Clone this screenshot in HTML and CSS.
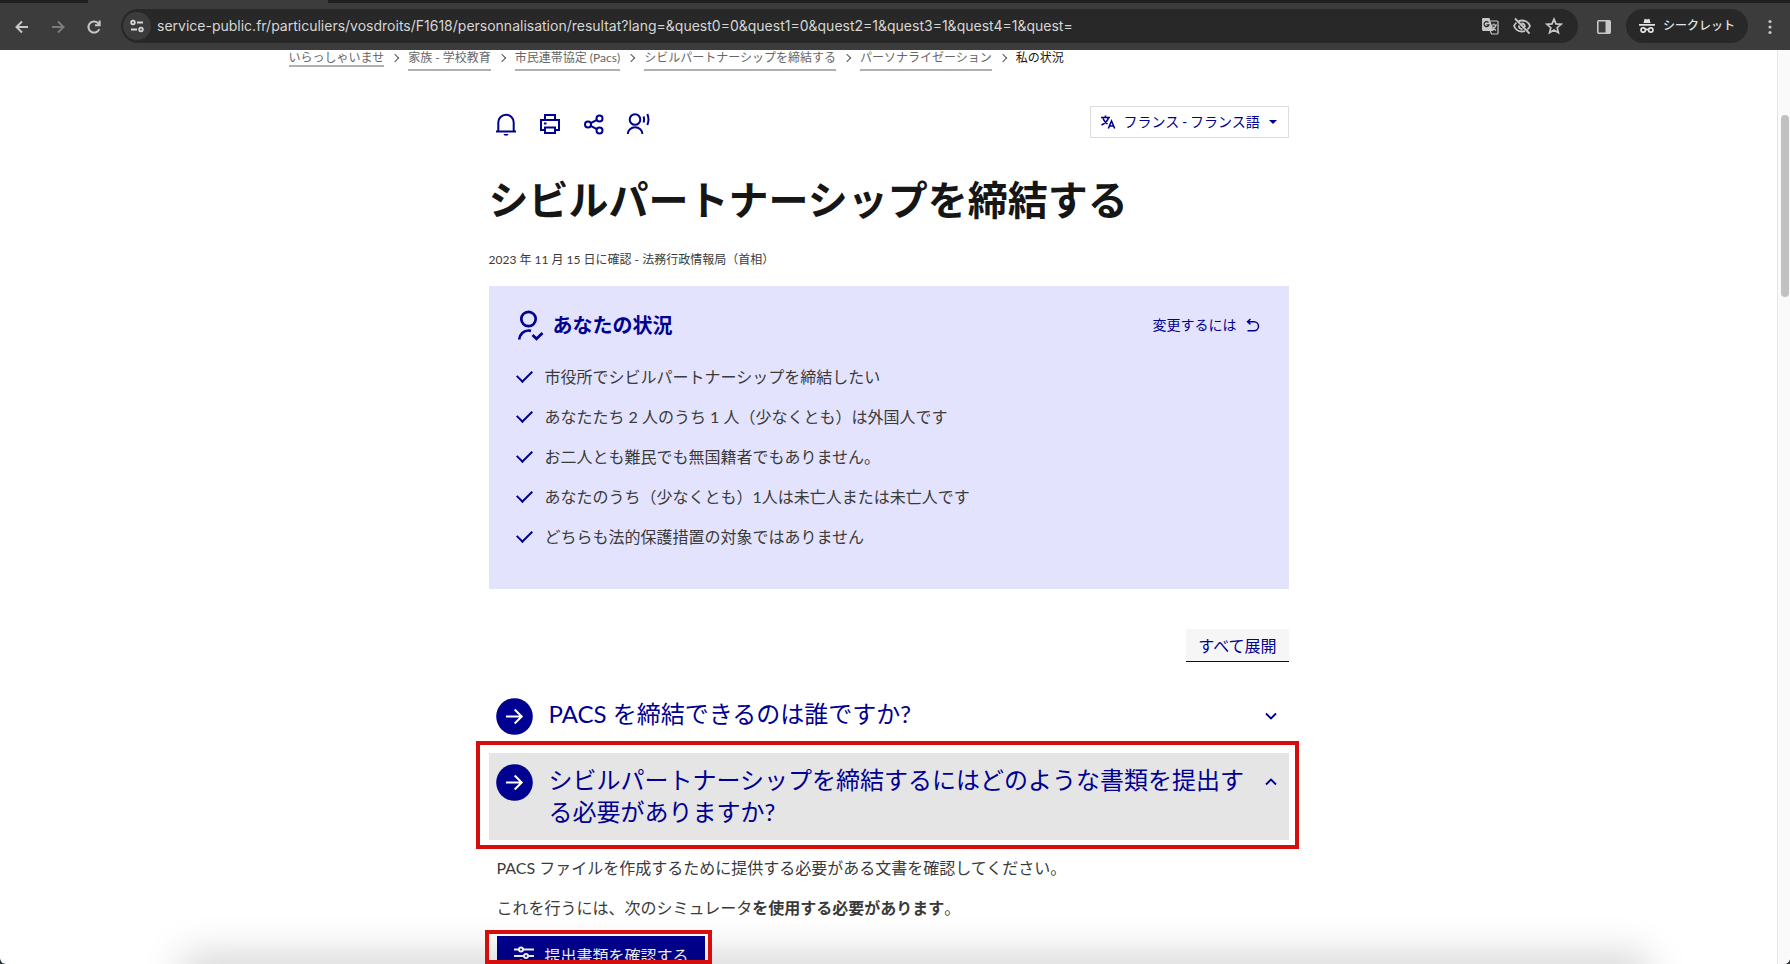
FILE: index.html
```html
<!DOCTYPE html>
<html lang="ja">
<head>
<meta charset="utf-8">
<title>シビルパートナーシップを締結する</title>
<link rel="stylesheet" href="styles.css">
</head>
<body>
<div class="window">
  <div class="tabstrip"><div class="tab-active"></div></div>
  <header class="toolbar">
    <button class="tool" aria-label="戻る"><svg width="18" height="18" viewBox="0 0 18 18" fill="none" stroke="#c7c7c7" stroke-width="2"><path d="M15 9H4M9 3.500L3.500 9 9 14.500"/></svg></button>
    <button class="tool" aria-label="進む"><svg width="18" height="18" viewBox="0 0 18 18" fill="none" stroke="#7b7b7b" stroke-width="2"><path d="M3 9h11M9 3.500l5.500 5.500L9 14.500"/></svg></button>
    <button class="tool" aria-label="再読み込み"><svg width="18" height="18" viewBox="0 0 18 18" fill="none" stroke="#c7c7c7" stroke-width="2"><path d="M14.300 11A5.600 5.600 0 1 1 13 5l1.500 1.500M14.700 2.500v4.700H10"/></svg></button>
    <div class="omnibox">
      <button class="site" aria-label="サイト情報"><svg width="16" height="16" viewBox="0 0 16 16" fill="none" stroke="#d6d6d6" stroke-width="1.800"><circle cx="4" cy="4.500" r="1.800"/><path d="M8 4.500h6M2 11.500h6"/><circle cx="12" cy="11.500" r="1.800"/></svg></button>
      <input class="url" aria-label="アドレス" value="service-public.fr/particuliers/vosdroits/F1618/personnalisation/resultat?lang=&amp;quest0=0&amp;quest1=0&amp;quest2=1&amp;quest3=1&amp;quest4=1&amp;quest=">
      <button class="omni-btn" aria-label="翻訳"><svg width="18" height="18" viewBox="0 0 18 18"><path d="M2 1h6.500l4 13H2.500A1.500 1.500 0 0 1 1 12.500V2a1 1 0 0 1 1-1z" fill="#c7c7c7"/><path d="M7.500 5.500A2.500 2.500 0 1 0 8 7.800H5.500" fill="none" stroke="#282828" stroke-width="1.200"/><path d="M9.500 4H16a1 1 0 0 1 1 1v11a1 1 0 0 1-1 1h-5.500l-1.200-3M10.500 8H16M13 6.500V8M15 8c-.5 2-2 3.800-3.500 4.500M11.500 9.500c.7 1.500 2 3 3.500 4" fill="none" stroke="#c7c7c7" stroke-width="1.200"/></svg></button>
      <button class="omni-btn" aria-label="Cookie をブロック"><svg width="20" height="18" viewBox="0 0 20 18" fill="none" stroke="#c7c7c7" stroke-width="1.800"><path d="M6.500 4.400C7.600 3.800 8.800 3.500 10 3.500c3.500 0 6.500 2 8 5.500-.6 1.400-1.500 2.600-2.600 3.500M13 14c-1 .4-2 .5-3 .5-3.500 0-6.500-2-8-5.500.6-1.400 1.400-2.500 2.500-3.400M3 1.500l14.500 15M12.700 10A3 3 0 0 0 9.500 6.300M7 8.500A3 3 0 0 0 10.500 12"/></svg></button>
      <button class="omni-btn" aria-label="ブックマーク"><svg width="18" height="18" viewBox="0 0 18 18" fill="none" stroke="#c7c7c7" stroke-width="1.700"><path d="M9 2.200l2 4.700 5.100.4-3.900 3.400 1.200 5L9 13l-4.400 2.700 1.200-5L1.900 7.300 7 6.900z"/></svg></button>
    </div>
    <button class="tool panel" aria-label="サイドパネル"><svg width="16" height="16" viewBox="0 0 16 16"><rect x="1.800" y="1.800" width="12.400" height="12.400" rx="1" fill="none" stroke="#c7c7c7" stroke-width="1.600"/><path d="M9.500 1.500H14v13H9.500z" fill="#c7c7c7"/></svg></button>
    <button class="incognito"><svg width="16" height="16" viewBox="0 0 16 16" fill="#e3e3e3"><path d="M4.500 5L5.600.8 8 1.500l2.400-.7L11.500 5zM0 6h16v1.700H0z"/><g fill="none" stroke="#e3e3e3" stroke-width="1.700"><circle cx="4.200" cy="12" r="2.200"/><circle cx="11.800" cy="12" r="2.200"/><path d="M6.400 11.800q1.600-.8 3.200 0"/></g></svg><span>シークレット</span></button>
    <button class="tool more" aria-label="メニュー"><svg width="16" height="16" viewBox="0 0 16 16" fill="#c7c7c7"><circle cx="8" cy="2.500" r="1.600"/><circle cx="8" cy="8" r="1.600"/><circle cx="8" cy="13.500" r="1.600"/></svg></button>
  </header>
  <div class="viewport">
    <div class="page">
      <nav class="crumbs" aria-label="パンくず">
        <a class="home" href="#">いらっしゃいませ</a><i class="sep"></i>
        <a href="#">家族 - 学校教育</a><i class="sep"></i>
        <a href="#">市民連帯協定 (Pacs)</a><i class="sep"></i>
        <a href="#">シビルパートナーシップを締結する</a><i class="sep"></i>
        <a href="#">パーソナライゼーション</a><i class="sep"></i>
        <span>私の状況</span>
      </nav>
      <main class="content">
        <div class="actions">
          <button aria-label="購読"><svg width="24" height="24" viewBox="0 0 24 24" fill="none" stroke="#000091" stroke-width="2"><path d="M4.300 19v-8.500a7.700 7.700 0 0 1 15.400 0V19M2 19.500h20"/><path d="M9.500 22h5a2.500 1.800 0 0 1-5 0z" fill="#000091" stroke="none"/></svg></button>
          <button aria-label="印刷"><svg width="24" height="24" viewBox="0 0 24 24" fill="none" stroke="#000091" stroke-width="2"><path d="M7 8V3h10v5M7 18H3V8h18v10h-4M7 15.500h10V21H7zM6 11.500h2.500"/></svg></button>
          <button aria-label="共有"><svg width="24" height="24" viewBox="0 0 24 24" fill="none" stroke="#000091" stroke-width="2"><circle cx="6" cy="12.500" r="3"/><circle cx="17.500" cy="6.500" r="3"/><circle cx="17.500" cy="18.500" r="3"/><path d="M8.700 11.200l6.200-3.300M8.700 13.800l6.200 3.300"/></svg></button>
          <button aria-label="読み上げ"><svg width="24" height="24" viewBox="0 0 24 24" fill="none" stroke="#000091" stroke-width="2"><circle cx="9" cy="7.500" r="5.300"/><path d="M1.800 22a7.300 6.800 0 0 1 14.600 0M17.500 4.500q1.200 2.800 0 6M21.300 2q2.400 5.500 0 11"/></svg></button>
          <label class="lang">
            <svg width="16" height="16" viewBox="0 0 16 16" fill="none" stroke="#000091" stroke-width="1.600"><path d="M1 3.500h9M5.500 1.500v2M8.500 3.500C7.800 6.500 5 9.500 1.500 11M3 4.500c1 2.500 2.500 4 4.500 5.500M8.300 14.500L11.500 7l3.200 7.500M9.500 12h4"/></svg>
            <select aria-label="言語"><option>フランス - フランス語</option></select>
            <svg class="caret" width="8" height="4" viewBox="0 0 8 4"><path d="M0 0h8L4 4z" fill="#000091"/></svg>
          </label>
        </div>
        <h1>シビルパートナーシップを締結する</h1>
        <p class="date">2023 年 11 月 15 日に確認 - 法務行政情報局（首相）</p>
        <section class="situation">
          <div class="situation-head">
            <svg width="32" height="32" viewBox="0 0 32 32" fill="none" stroke="#000091" stroke-width="2.700"><circle cx="15.500" cy="10" r="7.200"/><path d="M6.200 30.500c.5-5.500 4.500-9 9.300-9 1 0 1.800.2 2.500.4M19.500 26l4 3.800 6-5.800"/></svg>
            <h2>あなたの状況</h2>
            <a href="#">変更するには<svg width="14" height="14" viewBox="0 0 14 14" fill="none" stroke="#000091" stroke-width="1.500"><path d="M4.500 1L1.500 3.700l3 2.700M1.500 3.700H8a4.500 4.500 0 0 1 0 9H1.500"/></svg></a>
          </div>
          <ul>
            <li>市役所でシビルパートナーシップを締結したい</li>
            <li>あなたたち 2 人のうち 1 人（少なくとも）は外国人です</li>
            <li>お二人とも難民でも無国籍者でもありません。</li>
            <li>あなたのうち（少なくとも）1人は未亡人または未亡人です</li>
            <li>どちらも法的保護措置の対象ではありません</li>
          </ul>
        </section>
        <div class="expand"><button>すべて展開</button></div>
        <section class="accordion">
          <button class="acc" aria-expanded="false">
            <svg class="disc" width="37" height="37" viewBox="0 0 37 37"><circle cx="18.500" cy="18.500" r="18.300" fill="#000091"/><path d="M10 18.500h16M18.700 11.500l7 7-7 7" fill="none" stroke="#fff" stroke-width="2"/></svg>
            <span>PACS を締結できるのは誰ですか?</span>
            <svg class="chev" width="12" height="8" viewBox="0 0 12 8"><path d="M1 1.500l5 5 5-5" fill="none" stroke="#000091" stroke-width="1.800"/></svg>
          </button>
          <div class="marked">
            <button class="acc open" aria-expanded="true">
              <svg class="disc" width="37" height="37" viewBox="0 0 37 37"><circle cx="18.500" cy="18.500" r="18.300" fill="#000091"/><path d="M10 18.500h16M18.700 11.500l7 7-7 7" fill="none" stroke="#fff" stroke-width="2"/></svg>
              <span>シビルパートナーシップを締結するにはどのような書類を提出する必要がありますか?</span>
              <svg class="chev" width="12" height="8" viewBox="0 0 12 8"><path d="M1 6.500l5-5 5 5" fill="none" stroke="#000091" stroke-width="1.800"/></svg>
            </button>
            <div class="mark mark-heading"></div>
          </div>
          <div class="panel-body">
            <p>PACS ファイルを作成するために提供する必要がある文書を確認してください。</p>
            <p>これを行うには、次のシミュレータ<b>を使用する必要があります</b>。</p>
            <button class="cta"><svg width="22" height="20" viewBox="0 0 22 20" fill="none" stroke="#fff" stroke-width="2"><path d="M1 3.500h5M10 3.500h11M1 10h10M15 10h6M1 16.500h5M10 16.500h11"/><circle cx="8" cy="3.500" r="2"/><circle cx="13" cy="10" r="2"/><circle cx="8" cy="16.500" r="2"/></svg>提出書類を確認する</button>
          </div>
        </section>
      </main>
    </div>
    <div class="scrollbar"><div class="thumb"></div></div>
  </div>
  <div class="dock-shadow"></div>
  <div class="cta-layer"><div class="cta-column"><div class="mark mark-cta"></div></div></div>
</div>
</body>
</html>
```
FILE: styles.css
```css
* { box-sizing: border-box; }
body {
  margin: 0;
  background: #2a3338;
  color: #3a3a3a;
  font-family: "Lato", "Noto Sans CJK JP", sans-serif;
  font-size: 16px;
  line-height: 24px;
}
button, select, input { font: inherit; color: inherit; margin: 0; padding: 0; border: 0; background: none; }
h1, h2, p, ul { margin: 0; padding: 0; }
a { color: inherit; text-decoration: none; }
svg { display: block; flex: none; }

.window {
  position: relative;
  display: flex;
  flex-direction: column;
  height: 100vh;
  overflow: hidden;
  border-radius: 0 0 6px 6px;
  background: #fff;
}

/* Browser chrome */
.tabstrip { height: 3px; background: #1f2120; flex: none; }
.tab-active { width: 240px; height: 3px; margin-left: 88px; background: #3c3c3c; }
.toolbar {
  display: flex;
  align-items: center;
  flex: none;
  height: 47px;
  padding: 0 12px 0 13px;
  background: #3c3c3c;
  font-family: "Inter", "Noto Sans CJK JP", sans-serif;
}
.tool { width: 18px; margin-right: 18px; }
.omnibox {
  display: flex;
  flex: 1;
  align-items: center;
  height: 34px;
  margin-top: -1px;
  padding: 0 8px 0 2px;
  border-radius: 17px;
  background: #282828;
}
.site { display: grid; place-items: center; width: 28px; height: 28px; border-radius: 50%; background: #3c3c3c; }
.url { flex: 1; min-width: 0; margin-left: 6px; font-size: 14px; line-height: 20px; color: #d6d6d6; }
.omni-btn { display: grid; place-items: center; width: 32px; }
.panel { width: 16px; margin: 0 14px 0 18px; }
.incognito {
  display: flex;
  align-items: center;
  gap: 8px;
  height: 34px;
  margin-top: -1px;
  padding: 0 13px;
  border-radius: 17px;
  background: #282828;
  color: #e3e3e3;
  font-size: 12px;
  font-weight: 500;
}
.more { width: 16px; margin: 0 0 0 14px; }

/* Page */
.viewport { display: flex; flex: 1; min-height: 0; }
.page { flex: 1; min-width: 0; overflow: hidden; }
.scrollbar { width: 13px; padding: 65px 1px 0 3px; border-left: 1px solid #e6e6e6; background: #fafafa; }
.thumb { height: 182px; border-radius: 4px; background: #c1c1c1; }

.crumbs {
  display: flex;
  align-items: flex-start;
  max-width: 1200px;
  height: 24px;
  margin: 0 auto;
  font-size: 12px;
  line-height: 16px;
  color: #161616;
  white-space: nowrap;
}
.crumbs a { height: 21px; border-bottom: 2px solid #b0b0b0; color: #666; }
.crumbs .home { height: 17px; }
.sep { width: 6px; height: 6px; margin: 5px 10px 0 8px; border: solid #555; border-width: 1px 1px 0 0; transform: rotate(45deg); }

.content { max-width: 800px; margin: 0 auto; color: #3a3a3a; }
.actions { display: flex; align-items: center; gap: 20px; padding: 32px 0 0 5px; color: #000091; }
.actions button { padding-top: 3px; }
.lang {
  display: flex;
  align-items: center;
  gap: 8px;
  height: 32px;
  margin-left: auto;
  padding: 0 11px 0 9px;
  border: 1px solid #ddd;
  font-family: "Roboto", "Noto Sans CJK JP", sans-serif;
  font-size: 14px;
}
.lang select { appearance: none; line-height: 24px; }

h1 { margin-top: 38px; font-size: 40px; line-height: 48px; font-weight: 700; color: #161616; }
.date { margin-top: 24px; font-size: 12px; line-height: 24px; }
.situation { margin-top: 14px; padding: 23px 29px 32px 24px; background: #e3e3fd; }
.situation-head { display: flex; align-items: center; gap: 8px; color: #000091; }
.situation h2 { font-size: 20px; line-height: 32px; font-weight: 700; }
.situation a { display: flex; align-items: center; gap: 9px; margin-left: auto; font-size: 14px; }
.situation ul { margin-top: 16px; list-style: none; }
.situation li { display: flex; align-items: center; gap: 13px; height: 40px; padding-left: 4px; }
.situation li::before {
  content: "";
  width: 13px;
  height: 7px;
  margin: -6px 0 0 0;
  border: solid #000091;
  border-width: 0 0 2px 2px;
  transform: rotate(-45deg);
}
.expand { display: flex; justify-content: flex-end; margin-top: 40px; }
.expand button { height: 33px; padding: 1px 12px 0; border-bottom: 1px solid #000091; background: #f6f6f6; color: #000091; }

.accordion { margin-top: 25px; }
.acc {
  display: flex;
  align-items: flex-start;
  width: 100%;
  padding: 11px 12px 18px 7px;
  text-align: left;
  font-size: 24px;
  line-height: 32px;
  color: #000091;
}
.acc span { flex: 1; margin: 0 8px 0 16px; }
.disc { width: 37px; height: 37px; }
.chev { margin-top: 14px; }
.acc.open { padding-bottom: 12px; background: #e5e5e5; }
.marked { position: relative; }
.mark { position: absolute; border: 4px solid #d60d0d; }
.mark-heading { top: -12px; right: -10px; bottom: -9px; left: -13px; }
.panel-body { padding: 16px 8px 0; }
.panel-body p { margin-bottom: 16px; }
.cta { display: flex; align-items: center; gap: 10px; height: 40px; padding: 0 16px; background: #000091; color: #fff; }

/* Soft shade along the bottom edge of the window */
.dock-shadow {
  position: absolute;
  right: 154px;
  bottom: -24px;
  left: 194px;
  height: 20px;
  box-shadow: 0 0 40px 12px rgba(0, 0, 0, 0.18);
}
.cta-layer { position: absolute; right: 13px; bottom: 0; left: 0; pointer-events: none; }
.cta-column { position: relative; max-width: 800px; margin: 0 auto; }
.mark-cta { bottom: 0; left: -4px; width: 227px; height: 34px; }
```
